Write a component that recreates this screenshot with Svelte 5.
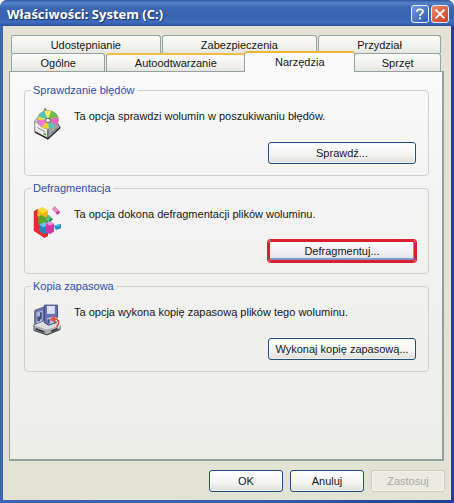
<script>
  const backTabs = [
    { label: 'Udostępnianie', grow: 149 },
    { label: 'Zabezpieczenia', grow: 155 },
    { label: 'Przydział', grow: 122 }
  ];
  const frontTabs = [
    { label: 'Ogólne', grow: 94 },
    { label: 'Autoodtwarzanie', grow: 139, hot: true },
    { label: 'Narzędzia', grow: 111 },
    { label: 'Sprzęt', grow: 86 }
  ];
  const groups = [
    { icon: 'check', title: 'Sprawdzanie błędów', text: 'Ta opcja sprawdzi wolumin w poszukiwaniu błędów.', action: 'Sprawdź...' },
    { icon: 'defrag', title: 'Defragmentacja', text: 'Ta opcja dokona defragmentacji plików woluminu.', action: 'Defragmentuj...', marked: true },
    { icon: 'backup', title: 'Kopia zapasowa', text: 'Ta opcja wykona kopię zapasową plików tego woluminu.', action: 'Wykonaj kopię zapasową...' }
  ];
  let active = $state('Narzędzia');
</script>

{#snippet tab(t)}
  <button
    type="button"
    role="tab"
    class="tab"
    class:hot={t.hot}
    class:active={active === t.label}
    aria-selected={active === t.label}
    style:flex-grow={t.grow}
    onclick={() => (active = t.label)}>{t.label}</button>
{/snippet}

<div class="window" role="dialog" aria-labelledby="title">
  <header>
    <h1 id="title">Właściwości: System (C:)</h1>
    <button type="button" class="caption help" aria-label="Pomoc">
      <svg viewBox="0 0 18 18" aria-hidden="true"><path d="M5.5 6.5C5.5 2.8 12.3 2.9 12.3 6.2C12.3 8.6 9 8.4 9 11.2M9 12.7V15" /></svg>
    </button>
    <button type="button" class="caption close" aria-label="Zamknij">
      <svg viewBox="0 0 18 18" aria-hidden="true"><path d="M4 4L14 14M14 4L4 14" /></svg>
    </button>
  </header>

  <main>
    <div class="tabs" role="tablist">
      <div class="row">{#each backTabs as t}{@render tab(t)}{/each}</div>
      <div class="row">{#each frontTabs as t}{@render tab(t)}{/each}</div>
    </div>

    <section class="panel" role="tabpanel">
      {#each groups as g}
        <fieldset>
          <legend>{g.title}</legend>
          <div class="info">
            {#if g.icon === 'check'}
              <svg class="icon" viewBox="0 0 32 36" aria-hidden="true">
                <path d="M2 14L13 4L16 5L28 19L17 33L2 26Z" fill="#d5d6d4" stroke="#8d8f90" />
                <path d="M12 5L14 0L16 4" fill="#e5e5e2" stroke="#4b4d50" />
                <path d="M2 15L17 24V34L2 27Z" fill="#eeeeec" stroke="#8b8d8e" />
                <path d="M17 24L28 17L31 22L17 35Z" fill="#a3a6a9" stroke="#3b3e40" />
                <ellipse cx="17" cy="13" rx="12" ry="10.5" fill="#eadf43" stroke="#969a78" />
                <path d="M17 13L6 9A12 10.5 0 0 1 13 3.2Z" fill="#4fc3bd" />
                <path d="M17 13L13 3.2A12 10.5 0 0 1 21 3.2Z" fill="#f5ea62" />
                <path d="M17 13L21 3.2A12 10.5 0 0 1 28.5 10Z" fill="#69bd50" />
                <path d="M17 13L28.5 10A12 10.5 0 0 1 26 20Z" fill="#e966bd" />
                <path d="M17 13L26 20A12 10.5 0 0 1 18 23.5Z" fill="#58c0be" />
                <path d="M17 13L18 23.5A12 10.5 0 0 1 10 21.5Z" fill="#e5d42c" />
                <path d="M17 13L10 21.5A12 10.5 0 0 1 5 13Z" fill="#ef79ce" />
                <ellipse cx="17" cy="14" rx="3" ry="2.5" fill="#f2f3f3" stroke="#4a4d50" />
                <path d="M5 22L14 27M20 29L28 22" stroke="#777" fill="none" />
                <path d="M12 28l3 1v2l-3-1z" fill="#529b3c" />
                <path d="M2 27L17 35L31 22" fill="none" stroke="#252729" stroke-width="1.5" />
              </svg>
            {:else if g.icon === 'defrag'}
              <svg class="icon" viewBox="0 0 32 36" aria-hidden="true">
                <path d="M1 6L5 3L17 10V34L13 36L1 28Z" fill="#b70f26" />
                <path d="M1 6L6 4L7 24L17 30V34L13 36L1 28Z" fill="#e72a33" />
                <path d="M5 4L11 1L17 5L17 12L11 15L5 11Z" fill="#f3b917" />
                <path d="M5 4L11 1L17 5L11 8Z" fill="#fde03d" />
                <path d="M6 12L10 10L16 14V21L10 23L6 20Z" fill="#5aa52c" />
                <path d="M7 21L13 18L18 21V29L13 32L7 28Z" fill="#2386bd" />
                <path d="M7 21L13 18L18 21L12 24Z" fill="#65c5e5" />
                <path d="M15 19L20 17L24 20V29L19 32L15 29Z" fill="#c43da5" />
                <path d="M15 19L20 17L24 20L19 22Z" fill="#ee99da" />
                <path d="M14 15L18 10L23 15L19 18Z" fill="#27935b" />
                <path d="M14 15L18 10L21 13L17 17Z" fill="#54be85" />
                <path d="M22 3L25 0L31 7L28 10Z" fill="#b64b8c" />
                <path d="M22 3L25 0L29 5L26 7Z" fill="#e590c4" />
                <path d="M24 22L32 20V25L26 27Z" fill="#218cc9" />
                <path d="M24 22L32 20L29 23Z" fill="#61c5ec" />
              </svg>
            {:else}
              <svg class="icon" viewBox="0 0 32 36" aria-hidden="true">
                <path d="M2 7L13 3V21L2 25Z" fill="#6874aa" stroke="#464f78" />
                <path d="M4 9L11 7V19L4 22Z" fill="#aeb5d4" />
                <path d="M5 14h3v5H5zM8 9h2v8H8z" fill="#404b7e" />
                <path d="M1 24L13 19L31 24V29L16 35L1 30Z" fill="#a8aaad" stroke="#54575e" />
                <path d="M1 24L13 19L31 24L16 29Z" fill="#dcdddf" />
                <path d="M3 28L13 32M21 31L28 28" stroke="#33373d" stroke-width="2" />
                <path d="M13 1H28V20L18 24L13 21Z" fill="#6670b4" stroke="#383f76" />
                <path d="M16 2H25V11H16Z" fill="#dce1f3" />
                <path d="M16 16L24 14V21L18 23Z" fill="#bdc4df" />
                <path d="M18 17v5" stroke="#41497f" stroke-width="2" />
                <path d="M28 26C32 20 28 16 23 17" fill="none" stroke="#fff" stroke-width="4" />
                <path d="M27 26C32 20 28 16 23 17" fill="none" stroke="#dd4836" stroke-width="2" />
                <path d="M19 18L25 12L26 21Z" fill="#e35440" />
                <path d="M2 30L16 35L30 29" fill="none" stroke="#41464d" />
              </svg>
            {/if}
            <p>{g.text}</p>
          </div>
          <button type="button" class="push wide" class:marked={g.marked}>{g.action}</button>
        </fieldset>
      {/each}
    </section>

    <footer>
      <button type="button" class="push">OK</button>
      <button type="button" class="push">Anuluj</button>
      <button type="button" class="push" disabled>Zastosuj</button>
    </footer>
  </main>
</div>

<style>
  :global(body) {
    margin: 0;
    background: #fff;
  }
  .window,
  .window * {
    box-sizing: border-box;
  }
  .window {
    display: flex;
    flex-direction: column;
    min-height: 100vh;
    padding: 0 3px 3px;
    background: linear-gradient(90deg, #3d65b4, #3a5fae 50%, #233f94);
    border-radius: 7px 7px 0 0;
    font: 11px/14px 'Liberation Sans', Arial, sans-serif;
    color: #161616;
  }
  button {
    font: inherit;
    color: inherit;
    padding: 0;
  }
  header {
    display: flex;
    align-items: center;
    gap: 2px;
    height: 26px;
    margin: 0 -3px;
    padding: 2px 5px 0 7px;
    border-radius: 7px 7px 0 0;
    background: linear-gradient(#2f559f, #5684c8 3px, #3c68b3 7px, #3962af 16px, #406cc0 22px, #2c519d);
  }
  h1 {
    flex: 1;
    margin: 0;
    font: bold 13px/18px 'Open Sans', 'Trebuchet MS', sans-serif;
    color: #fff;
    text-shadow: 1px 1px 1px #17336d;
  }
  .caption {
    width: 18px;
    height: 18px;
    border: 1px solid #e4ecf8;
    border-radius: 3px;
  }
  .caption svg {
    display: block;
    width: 16px;
    height: 16px;
    fill: none;
    stroke: #fff;
    stroke-width: 2;
  }
  .help {
    background: linear-gradient(135deg, #7199d9, #315db4);
  }
  .close {
    background: linear-gradient(135deg, #ec8a6b, #cb3f20);
  }
  main {
    flex: 1;
    display: flex;
    flex-direction: column;
    padding: 9px 7px 8px 6px;
    background: #e2e3d4;
  }
  .tabs {
    padding: 0 3px 0 2px;
  }
  .row {
    display: flex;
    gap: 1px;
    height: 18px;
  }
  .tab {
    flex: 1 1 0;
    height: 18px;
    border: 1px solid #93a5a5;
    border-bottom: 0;
    border-radius: 3px 3px 0 0;
    background: linear-gradient(#fcfcfb, #eff0eb 70%, #e5e6df);
  }
  .tab.hot {
    border-top: 2px solid #f0bd48;
  }
  .tab.active {
    position: relative;
    height: 21px;
    margin: -2px -2px 0;
    padding-bottom: 2px;
    border-top: 2px solid #efb536;
    background: #fafafb;
  }
  .panel {
    flex: 1;
    padding: 11px 13px 0 14px;
    border: 1px solid #93a09f;
    border-right-width: 2px;
    border-bottom-width: 2px;
    background: linear-gradient(#fafafb, #f4f4f4 30%, #edeee8);
  }
  fieldset {
    display: flex;
    flex-direction: column;
    height: 93px;
    min-width: 0;
    margin: 0 0 5px;
    padding: 4px 12px 11px 8px;
    border: 1px solid #cfd0c8;
    border-radius: 4px;
  }
  legend {
    margin-left: -2px;
    padding: 0 2px;
    color: #2b4fae;
  }
  .info {
    display: flex;
    flex: 1;
    gap: 13px;
  }
  .icon {
    flex: none;
    width: 28px;
    height: 32px;
    margin-top: 7px;
  }
  p {
    margin: 8px 0 0;
    white-space: nowrap;
  }
  .push {
    flex: none;
    width: 74px;
    height: 22px;
    border: 1px solid #1f4e80;
    border-radius: 3px;
    background: linear-gradient(#fff, #f4f4f1 60%, #dedfd7);
    box-shadow: inset 0 0 0 1px #ffffff80;
  }
  .wide {
    align-self: flex-end;
    width: 148px;
    white-space: nowrap;
  }
  .marked {
    border: 1px solid #d9202e;
    background: linear-gradient(#fafbff, #eeedf0 70%, #d5d6e3);
    box-shadow: 0 0 0 1px #d9202e, inset 0 0 0 1px #d9202e, inset -1px -2px 0 1px #8296cf;
  }
  .push:disabled {
    color: #aaaa9f;
    border-color: #cbccbd;
    background: #ebebdf;
  }
  footer {
    display: flex;
    justify-content: flex-end;
    gap: 7px;
    margin: 9px -1px 0 0;
  }
</style>
